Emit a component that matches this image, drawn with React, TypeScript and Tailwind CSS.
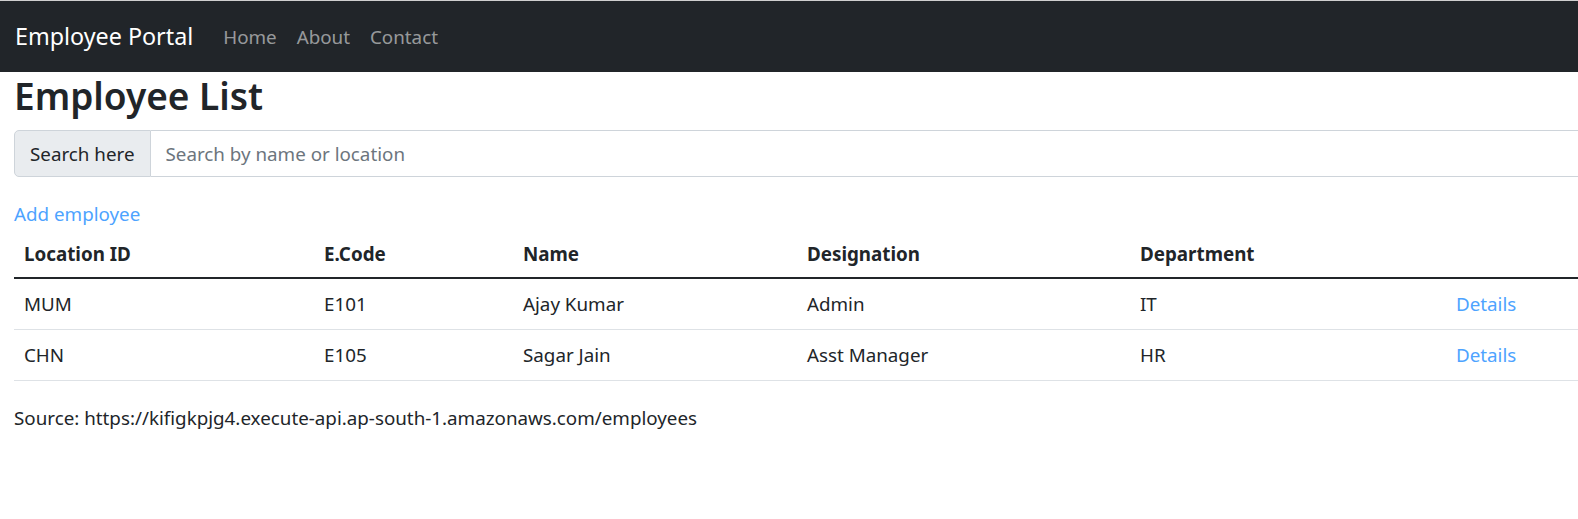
import React from "react";

interface Employee {
  location: string;
  code: string;
  name: string;
  designation: string;
  department: string;
}

const employees: Employee[] = [
  { location: "MUM", code: "E101", name: "Ajay Kumar", designation: "Admin", department: "IT" },
  { location: "CHN", code: "E105", name: "Sagar Jain", designation: "Asst Manager", department: "HR" },
];

const font = "font-['Segoe_UI','Noto_Sans',sans-serif]";

export default function App() {
  return (
    <div className={`${font} text-[18.8px] leading-[30px] text-[#212529] bg-white min-h-[519px] overflow-hidden border-t border-[#cfcfcf]`}>
      <nav className="bg-[#212529] h-[71px] flex items-center px-[15px]">
        <a className="text-white text-[23.3px] leading-[37px] mr-[30px]">Employee Portal</a>
        <div className="flex gap-[20px] text-[rgba(255,255,255,0.55)]">
          <a>Home</a>
          <a>About</a>
          <a>Contact</a>
        </div>
      </nav>

      <main className="pl-[14px] w-[1620px]">
        <h2 className="text-[37px] leading-[48px] font-semibold mb-[10px]">Employee List</h2>

        <div className="flex h-[47px] mb-[22px]">
          <span className="flex items-center px-[15px] bg-[#e9ecef] border border-[#ced4da] rounded-l-[5px]">
            Search here
          </span>
          <input
            className="flex-1 px-[15px] border border-l-0 border-[#ced4da] outline-none placeholder:text-[#6c757d]"
            placeholder="Search by name or location"
          />
        </div>

        <a className="text-[#4da3ff]">Add employee</a>

        <table className="w-full border-collapse mb-[22px] text-left">
          <thead>
            <tr className="border-b-2 border-[#212529]">
              <th className="px-[10px] pt-[10px] pb-[8px] w-[300px] font-bold">Location ID</th>
              <th className="px-[10px] pt-[10px] pb-[8px] w-[199px] font-bold">E.Code</th>
              <th className="px-[10px] pt-[10px] pb-[8px] w-[284px] font-bold">Name</th>
              <th className="px-[10px] pt-[10px] pb-[8px] w-[333px] font-bold">Designation</th>
              <th className="px-[10px] pt-[10px] pb-[8px] w-[316px] font-bold">Department</th>
              <th className="px-[10px] pt-[10px] pb-[8px]"></th>
            </tr>
          </thead>
          <tbody>
            {employees.map((e) => (
              <tr key={e.code} className="border-b border-[#dee2e6]">
                <td className="px-[10px] py-[10px]">{e.location}</td>
                <td className="px-[10px] py-[10px]">{e.code}</td>
                <td className="px-[10px] py-[10px]">{e.name}</td>
                <td className="px-[10px] py-[10px]">{e.designation}</td>
                <td className="px-[10px] py-[10px]">{e.department}</td>
                <td className="px-[10px] py-[10px]">
                  <a className="text-[#4da3ff]">Details</a>
                </td>
              </tr>
            ))}
          </tbody>
        </table>

        <p>Source: https://kifigkpjg4.execute-api.ap-south-1.amazonaws.com/employees</p>
      </main>
    </div>
  );
}
